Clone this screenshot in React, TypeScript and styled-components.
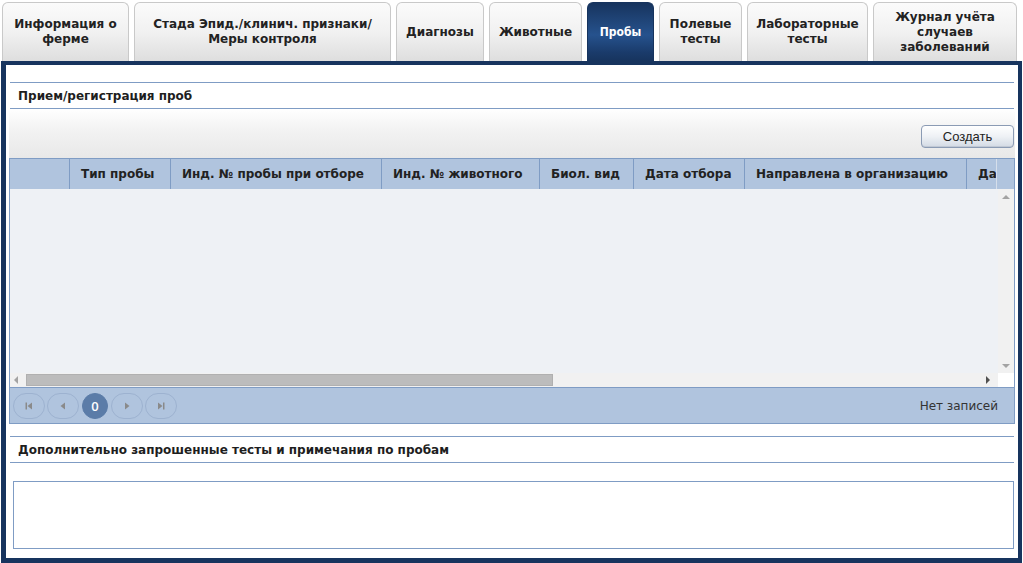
import React from "react";
import styled, { createGlobalStyle, css } from "styled-components";

const GlobalStyle = createGlobalStyle`
  html, body {
    margin: 0;
    padding: 0;
    background: #ffffff;
  }
  body {
    font-family: "DejaVu Sans", Verdana, sans-serif;
    color: #222;
  }
`;

const Page = styled.div`
  width: 1023px;
  height: 563px;
  padding: 2px 1px 0 1px;
  box-sizing: border-box;
  display: flex;
  flex-direction: column;
`;

const TabBar = styled.div`
  display: flex;
  gap: 5px;
  height: 59px;
  padding-left: 1px;
`;

const Tab = styled.div<{ $w: number; $active?: boolean }>`
  width: ${(p) => p.$w}px;
  box-sizing: border-box;
  display: flex;
  align-items: center;
  justify-content: center;
  text-align: center;
  border-radius: 6px 6px 0 0;
  font-size: 12px;
  font-weight: bold;
  line-height: 15px;
  color: #222;
  border: 1px solid #c9c9c9;
  border-bottom: none;
  background: linear-gradient(#fbfbfb 0%, #f1f1f1 50%, #dedede 100%);
  padding: 0 3px;
  white-space: nowrap;
  ${(p) =>
    p.$active &&
    css`
      color: #ffffff;
      border-color: #17345e;
      font-family: "DejaVu Sans Condensed", "DejaVu Sans", sans-serif;
      background: linear-gradient(#17345e 0%, #26528d 55%, #1a3b6b 85%, #17345e 100%);
    `}
`;

const Panel = styled.div`
  flex: 1;
  border: 4px solid #17345e;
  border-left-width: 5px;
  border-bottom-width: 5px;
  background: #ffffff;
  padding: 17px 3px 0 3px;
  display: flex;
  flex-direction: column;
`;

const SectionTitle = styled.div`
  margin: 0 1px;
  height: 25px;
  border-top: 1px solid #7f9cc4;
  border-bottom: 1px solid #7f9cc4;
  display: flex;
  align-items: center;
  padding-left: 8px;
  font-size: 12px;
  font-weight: bold;
  color: #1e1e1e;
`;

const Toolbar = styled.div`
  height: 49px;
  background: linear-gradient(#ffffff 0%, #f3f3f3 40%, #e8e8e8 100%);
  display: flex;
  align-items: center;
  justify-content: flex-end;
  padding-right: 1px;
  padding-top: 6px;
  box-sizing: border-box;
`;

const Button = styled.button`
  width: 93px;
  height: 23px;
  border: 1px solid #8b9bb4;
  border-radius: 4px;
  background: linear-gradient(#ffffff 0%, #eef1f5 50%, #d3dae4 100%);
  box-shadow: inset 0 -1px 0 #c0c8d4;
  font-family: "Liberation Sans", Arial, sans-serif;
  font-size: 13px;
  color: #222;
  padding: 0;
`;

const Grid = styled.div`
  border: 1px solid #7f9cc4;
  border-top: none;
  display: flex;
  flex-direction: column;
`;

const HeaderRow = styled.div`
  display: flex;
  height: 30px;
  background: #b0c4de;
  border-top: 1px solid #7f9cc4;
`;

const HeaderCells = styled.div`
  flex: 1;
  display: flex;
  overflow: hidden;
  border-right: 1px solid #d6dfeb;
`;

const HeaderCell = styled.div<{ $w: number }>`
  flex: 0 0 ${(p) => p.$w}px;
  box-sizing: border-box;
  border-right: 1px solid #7f9cc4;
  display: flex;
  align-items: center;
  padding-left: 11px;
  font-size: 12px;
  font-weight: bold;
  color: #222;
  white-space: nowrap;
`;

const ScrollSpacer = styled.div`
  width: 17px;
`;

const Body = styled.div`
  display: grid;
  grid-template-columns: 1fr 16px;
  grid-template-rows: 184px 14px;
`;

const BodyArea = styled.div`
  background: #eef1f5;
`;

const VScroll = styled.div`
  background: #f1f1f1;
  display: flex;
  flex-direction: column;
  justify-content: space-between;
  align-items: center;
  padding: 6px 0 5px;
  box-sizing: border-box;
`;

const HScroll = styled.div`
  background: #f1f1f1;
  display: flex;
  align-items: center;
  padding: 0 8px 0 4px;
  gap: 8px;
`;

const Thumb = styled.div`
  width: 527px;
  height: 12px;
  background: #bcbcbc;
  border: 1px solid #b0b0b0;
  box-sizing: border-box;
`;

const Corner = styled.div`
  background: #ffffff;
`;

const Arrow = styled.div<{ $dir: "up" | "down" | "left" | "right" }>`
  width: 0;
  height: 0;
  ${(p) =>
    p.$dir === "up" &&
    css`
      border-left: 4px solid transparent;
      border-right: 4px solid transparent;
      border-bottom: 4px solid #a3a3a3;
    `}
  ${(p) =>
    p.$dir === "down" &&
    css`
      border-left: 4px solid transparent;
      border-right: 4px solid transparent;
      border-top: 4px solid #a3a3a3;
    `}
  ${(p) =>
    p.$dir === "left" &&
    css`
      border-top: 4px solid transparent;
      border-bottom: 4px solid transparent;
      border-right: 4px solid #a3a3a3;
    `}
  ${(p) =>
    p.$dir === "right" &&
    css`
      border-top: 4px solid transparent;
      border-bottom: 4px solid transparent;
      border-left: 4px solid #505050;
    `}
`;

const Spacer = styled.div`
  flex: 1;
`;

const Pager = styled.div`
  height: 35px;
  background: #b0c4de;
  border-top: 1px solid #7f9cc4;
  display: flex;
  align-items: center;
  padding: 0 16px 0 3px;
  gap: 2px;
`;

const PageButton = styled.div<{ $active?: boolean }>`
  width: 32px;
  height: 26px;
  box-sizing: border-box;
  border-radius: 13px;
  border: 1px solid #9db2d0;
  display: flex;
  align-items: center;
  justify-content: center;
  color: #8a8a8a;
  ${(p) =>
    p.$active &&
    css`
      width: 26px;
      margin: 0 1px;
      border-color: #5b7ca8;
      background: #5b7ca8;
      color: #ffffff;
      font-family: "Open Sans", "DejaVu Sans", sans-serif;
      font-size: 13px;
      font-weight: 600;
    `}
`;

const PagerInfo = styled.div`
  margin-left: auto;
  font-size: 12px;
  color: #333;
`;

const Gap = styled.div<{ $h: number }>`
  height: ${(p) => p.$h}px;
  flex: none;
`;

const Notes = styled.div`
  margin: 0 1px 0 4px;
  height: 66px;
  border: 1px solid #7f9cc4;
  background: #ffffff;
`;

const columns: [string, number][] = [
  ["", 60],
  ["Тип пробы", 101],
  ["Инд. № пробы при отборе", 211],
  ["Инд. № животного", 158],
  ["Биол. вид", 94],
  ["Дата отбора", 111],
  ["Направлена в организацию", 222],
  ["Дата", 120],
];

const tabs: { label: React.ReactNode; w: number; active?: boolean }[] = [
  { label: <>Информация о<br />ферме</>, w: 127 },
  { label: <>Стада Эпид./клинич. признаки/<br />Меры контроля</>, w: 257 },
  { label: "Диагнозы", w: 88 },
  { label: "Животные", w: 93 },
  { label: "Пробы", w: 67, active: true },
  { label: <>Полевые<br />тесты</>, w: 83 },
  { label: <>Лабораторные<br />тесты</>, w: 121 },
  { label: <>Журнал учёта<br />случаев<br />заболеваний</>, w: 144 },
];

const PagerIcon: React.FC<{ kind: "first" | "prev" | "next" | "last" }> = ({ kind }) => (
  <svg width="10" height="10" viewBox="0 0 10 10" fill="#8a8a8a">
    {kind === "first" && (
      <>
        <rect x="1.5" y="1.5" width="1.5" height="7" />
        <path d="M8 1.5 L3.5 5 L8 8.5 Z" />
      </>
    )}
    {kind === "prev" && <path d="M7 1.5 L2.5 5 L7 8.5 Z" />}
    {kind === "next" && <path d="M3 1.5 L7.5 5 L3 8.5 Z" />}
    {kind === "last" && (
      <>
        <path d="M2 1.5 L6.5 5 L2 8.5 Z" />
        <rect x="7" y="1.5" width="1.5" height="7" />
      </>
    )}
  </svg>
);

const App: React.FC = () => {
  return (
    <>
      <GlobalStyle />
      <Page>
        <TabBar>
          {tabs.map((t, i) => (
            <Tab key={i} $w={t.w} $active={t.active}>
              <span>{t.label}</span>
            </Tab>
          ))}
        </TabBar>
        <Panel>
          <SectionTitle>Прием/регистрация проб</SectionTitle>
          <Toolbar>
            <Button>Создать</Button>
          </Toolbar>
          <Grid>
            <HeaderRow>
              <HeaderCells>
                {columns.map(([name, w], i) => (
                  <HeaderCell key={i} $w={w}>
                    {name}
                  </HeaderCell>
                ))}
              </HeaderCells>
              <ScrollSpacer />
            </HeaderRow>
            <Body>
              <BodyArea />
              <VScroll>
                <Arrow $dir="up" />
                <Arrow $dir="down" />
              </VScroll>
              <HScroll>
                <Arrow $dir="left" />
                <Thumb />
                <Spacer />
                <Arrow $dir="right" />
              </HScroll>
              <Corner />
            </Body>
            <Pager>
              <PageButton>
                <PagerIcon kind="first" />
              </PageButton>
              <PageButton>
                <PagerIcon kind="prev" />
              </PageButton>
              <PageButton $active>0</PageButton>
              <PageButton>
                <PagerIcon kind="next" />
              </PageButton>
              <PageButton>
                <PagerIcon kind="last" />
              </PageButton>
              <PagerInfo>Нет записей</PagerInfo>
            </Pager>
          </Grid>
          <Gap $h={12} />
          <SectionTitle>Дополнительно запрошенные тесты и примечания по пробам</SectionTitle>
          <Gap $h={18} />
          <Notes />
        </Panel>
      </Page>
    </>
  );
};

export default App;
